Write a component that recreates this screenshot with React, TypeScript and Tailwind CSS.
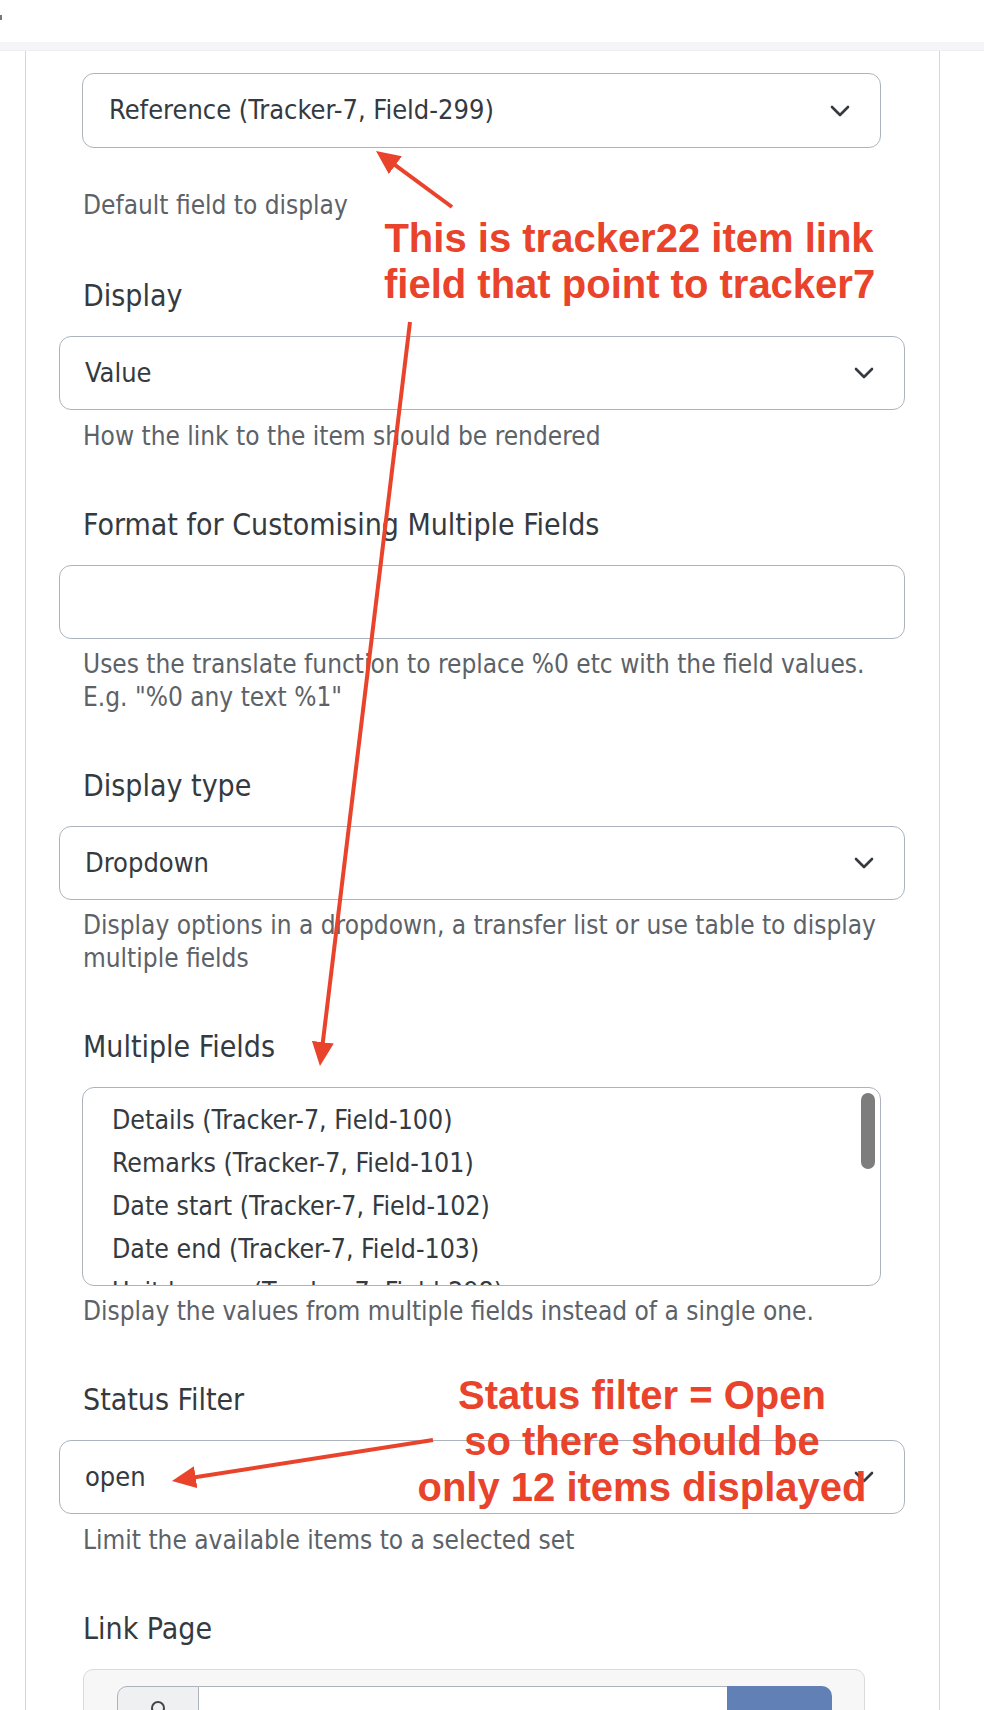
import React from "react";

const Chevron = () => (
  <svg width="20" height="12" viewBox="0 0 20 12" className="shrink-0">
    <path d="M2 2 L10 10 L18 2" fill="none" stroke="#343a40" strokeWidth="2.6" strokeLinecap="round" strokeLinejoin="round" />
  </svg>
);

const Label = ({ children, className = "" }: { children: React.ReactNode; className?: string }) => (
  <div className={"pl-[24px] text-[30px] leading-[44px] text-[#343a40] whitespace-nowrap " + className}>{children}</div>
);

const Help = ({ children, className = "" }: { children: React.ReactNode; className?: string }) => (
  <div className={"pl-[24px] text-[26px] leading-[33px] text-[#5c6268] whitespace-nowrap " + className}>{children}</div>
);

const Select = ({ value, className = "" }: { value: string; className?: string }) => (
  <div className={"h-[74px] rounded-[12px] border border-[#adb3bc] bg-white flex items-center justify-between pl-[25px] pr-[30px] " + className}>
    <span className="text-[27px] text-[#343a40] whitespace-nowrap">{value}</span>
    <Chevron />
  </div>
);

export default function App() {
  const options = [
    "Details (Tracker-7, Field-100)",
    "Remarks (Tracker-7, Field-101)",
    "Date start (Tracker-7, Field-102)",
    "Date end (Tracker-7, Field-103)",
    "Unit leaves (Tracker-7, Field-298)",
  ];
  return (
    <div className="relative w-[984px] h-[1710px] overflow-hidden bg-white text-[#343a40] [font-family:'DejaVu_Sans_Condensed','DejaVu_Sans',sans-serif]">
      {/* top bar */}
      <div className="h-[42px] relative">
        <div className="absolute left-0 top-[15px] w-[2px] h-[5px] bg-[#777]" />
      </div>
      <div className="h-[9px] bg-[#f5f5f7] border-b border-[#eceef1]" />

      {/* card */}
      <div className="ml-[25px] w-[915px] h-[1700px] border-x border-[#d6d6d6] bg-white">
        <div className="pl-[33px] pr-[34px] pt-[22px]">
          {/* group 1 */}
          <Select value="Reference (Tracker-7, Field-299)" className="ml-[23px] mr-[24px] h-[75px] pl-[26px]" />
          <Help className="mt-[41px]">Default field to display</Help>

          {/* Display */}
          <Label className="mt-[52px] mb-[18px]">Display</Label>
          <Select value="Value" />
          <Help className="mt-[10px]">How the link to the item should be rendered</Help>

          {/* Format */}
          <Label className="mt-[50px] mb-[18px]">Format for Customising Multiple Fields</Label>
          <div className="h-[74px] rounded-[12px] border border-[#adb3bc] bg-white" />
          <Help className="mt-[9px]">
            <div>Uses the translate function to replace %0 etc with the field values.</div>
            <div>E.g. "%0 any text %1"</div>
          </Help>

          {/* Display type */}
          <Label className="mt-[50px] mb-[18px]">Display type</Label>
          <Select value="Dropdown" />
          <Help className="mt-[9px]">
            <div>Display options in a dropdown, a transfer list or use table to display</div>
            <div>multiple fields</div>
          </Help>

          {/* Multiple Fields */}
          <Label className="mt-[50px] mb-[18px]">Multiple Fields</Label>
          <div className="ml-[23px] mr-[24px] h-[199px] rounded-[12px] border border-[#adb3bc] bg-white flex overflow-hidden">
            <div className="flex-1 pl-[29px] pt-[10px] overflow-hidden">
              {options.map((o) => (
                <div key={o} className="text-[26.5px] leading-[43px] text-[#343a40] whitespace-nowrap">{o}</div>
              ))}
            </div>
            <div className="w-[19px] pt-[5px] shrink-0">
              <div className="w-[14px] h-[76px] rounded-full bg-[#7d7d7d]" />
            </div>
          </div>
          <Help className="mt-[9px]">Display the values from multiple fields instead of a single one.</Help>

          {/* Status Filter */}
          <Label className="mt-[50px] mb-[18px]">Status Filter</Label>
          <Select value="open" />
          <Help className="mt-[10px]">Limit the available items to a selected set</Help>

          {/* Link Page */}
          <Label className="mt-[50px] mb-[18px]">Link Page</Label>
          <div className="ml-[24px] w-[782px] h-[120px] rounded-[10px] border border-[#dadada] bg-[#f7f7f7] pt-[16px] pl-[33px]">
            <div className="flex h-[74px] w-[715px]">
              <div className="w-[82px] rounded-tl-[10px] border border-[#adb3bc] bg-[#eef0f2] flex justify-center pt-[14px]">
                <div className="w-[14px] h-[14px] rounded-full border-[2.5px] border-[#444]" />
              </div>
              <div className="flex-1 border-y border-[#adb3bc] bg-white" />
              <div className="w-[105px] rounded-tr-[10px] bg-[#6181b6]" />
            </div>
          </div>
        </div>
      </div>

      {/* annotations overlay */}
      <svg className="absolute left-0 top-0 pointer-events-none" width="984" height="1710">
        <defs>
          <marker id="ah" viewBox="0 0 24 22" refX="12" refY="11" markerWidth="24" markerHeight="22" orient="auto" markerUnits="userSpaceOnUse">
            <path d="M0 0 L24 11 L0 22 Z" fill="#e9432b" />
          </marker>
        </defs>
        <line x1="452" y1="207" x2="385.7" y2="158.1" stroke="#e9432b" strokeWidth="4" markerEnd="url(#ah)" />
        <line x1="410" y1="322" x2="321.4" y2="1054.1" stroke="#e9432b" strokeWidth="4" markerEnd="url(#ah)" />
        <line x1="433" y1="1440" x2="183.8" y2="1479.1" stroke="#e9432b" strokeWidth="4" markerEnd="url(#ah)" />
      </svg>
      <div className="absolute left-[384px] top-[215px] w-[490px] text-center text-[40px] leading-[46px] font-bold text-[#e9432b] whitespace-nowrap [font-family:'Liberation_Sans',Arial,sans-serif]">
        <div>This is tracker22 item link</div>
        <div>field that point to tracker7</div>
      </div>
      <div className="absolute left-[412px] top-[1372px] w-[460px] text-center text-[40px] leading-[46px] font-bold text-[#e9432b] whitespace-nowrap [font-family:'Liberation_Sans',Arial,sans-serif]">
        <div>Status filter = Open</div>
        <div>so there should be</div>
        <div>only 12 items displayed</div>
      </div>
    </div>
  );
}
